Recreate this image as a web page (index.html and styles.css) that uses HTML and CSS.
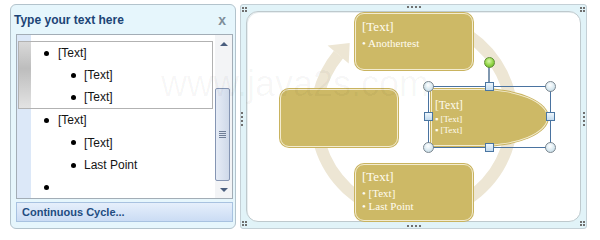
FILE: index.html
```html
<!DOCTYPE html>
<html>
<head>
<meta charset="utf-8">
<link rel="stylesheet" href="styles.css">
</head>
<body>
<div class="app">
  <section class="pane">
    <header class="pane-head">
      <span class="pane-title">Type your text here</span>
      <span class="pane-close">x</span>
    </header>
    <div class="list">
      <div class="rows">
        <div class="group selected">
          <div class="row l1"><span class="dot"></span>[Text]</div>
          <div class="row l2"><span class="dot"></span>[Text]</div>
          <div class="row l2"><span class="dot"></span>[Text]</div>
        </div>
        <div class="group">
          <div class="row l1"><span class="dot"></span>[Text]</div>
          <div class="row l2"><span class="dot"></span>[Text]</div>
          <div class="row l2"><span class="dot"></span>Last Point</div>
          <div class="row l1"><span class="dot"></span></div>
        </div>
      </div>
      <div class="scrollbar">
        <div class="sb-btn"><span class="tri up"></span></div>
        <div class="track">
          <div class="thumb"><span class="grip"></span></div>
        </div>
        <div class="sb-btn"><span class="tri down"></span></div>
      </div>
    </div>
    <footer class="pane-foot">Continuous Cycle...</footer>
  </section>

  <section class="canvas">
    <div class="canvas-inner"></div>
    <svg class="ring" width="345" height="223" viewBox="0 0 345 223">
      <path d="M124.0 27.13 A98 98 0 1 1 97.5 49.5" fill="none" stroke="#ede6d4" stroke-width="12"/>
      <polygon points="108.7,38.0 86.6,40.6 107.7,58.5" fill="#ede6d4"/>
    </svg>

    <div class="node top">
      <div class="n-title">[Text]</div>
      <div class="n-bullet">• Anothertest</div>
    </div>
    <div class="node left"></div>
    <div class="node bottom">
      <div class="n-title">[Text]</div>
      <div class="n-bullet">• [Text]</div>
      <div class="n-bullet tight">• Last Point</div>
    </div>
    <div class="node right">
      <div class="r-title">[Text]</div>
      <div class="r-bullet">▪ [Text]</div>
      <div class="r-bullet">▪ [Text]</div>
    </div>

    <div class="selection">
      <span class="stem"></span>
      <span class="h-rot"></span>
      <span class="hc tl"></span><span class="hc tr"></span>
      <span class="hc bl"></span><span class="hc br"></span>
      <span class="hs tm"></span><span class="hs bm"></span>
      <span class="hs ml"></span><span class="hs mr"></span>
    </div>

    <span class="gd corner c-tl"></span>
    <span class="gd corner c-tr"></span>
    <span class="gd corner c-bl"></span>
    <span class="gd corner c-br"></span>
    <span class="gd hz g-top"></span>
    <span class="gd hz g-bottom"></span>
    <span class="gd vt g-left"></span>
    <span class="gd vt g-right"></span>
  </section>

  <span class="watermark">www.java2s.com</span>
</div>
</body>
</html>
```

FILE: styles.css
```css
* { box-sizing: border-box; }

body {
  margin: 0;
  background: #ffffff;
  font-family: "Liberation Sans", Arial, sans-serif;
}

.app {
  position: relative;
  display: flex;
  align-items: flex-start;
  gap: 4px;
  padding: 4px 0 0 10px;
}

/* ---------- text pane ---------- */
.pane {
  width: 226px;
  height: 225px;
  border: 1px solid #b3c3cc;
  border-radius: 6px;
  background: #e6f6fc;
  display: flex;
  flex-direction: column;
}

.pane-head {
  height: 29px;
  flex: none;
  display: flex;
  align-items: center;
  justify-content: space-between;
  padding: 0 9px 0 3px;
}

.pane-title {
  font-size: 12px;
  font-weight: bold;
  color: #1c4476;
}

.pane-close {
  font-size: 14px;
  font-weight: bold;
  color: #7f8e9a;
  line-height: 1;
}

.list {
  margin-left: 5px;
  width: 217px;
  height: 165px;
  flex: none;
  border: 1px solid #a3adb6;
  background: #fff;
  display: flex;
}

.rows {
  width: 198px;
  padding-top: 6px;
  overflow: hidden;
  background: linear-gradient(to right, #dce8f8 0, #dce8f8 14px, #ffffff 14px);
}

.group { padding-left: 2px; }

.group.selected {
  margin-left: 1px;
  width: 195px;
  padding-left: 0;
  border: 1px solid #b2b2b2;
  background:
    linear-gradient(#d9d9d9, #bdbdbd 40%, #e3e3e3) left top / 12px 100% no-repeat,
    #ffffff;
}

.row {
  height: 22.5px;
  display: flex;
  align-items: center;
  font-size: 12px;
  color: #141414;
}

.group.selected .row { height: 22px; }

.row.l1 { padding-left: 25px; }
.row.l2 { padding-left: 52px; }

.dot {
  width: 5px;
  height: 5px;
  border-radius: 50%;
  background: #000;
  flex: none;
}
.l1 .dot { margin-right: 9px; }
.l2 .dot { margin-right: 8px; }

.scrollbar {
  width: 17px;
  display: flex;
  flex-direction: column;
  background: #f3f4f6;
}

.sb-btn {
  height: 17px;
  flex: none;
  display: flex;
  align-items: center;
  justify-content: center;
}

.tri {
  width: 0;
  height: 0;
  border-left: 4px solid transparent;
  border-right: 4px solid transparent;
}
.tri.up { border-bottom: 4px solid #4a5e7e; }
.tri.down { border-top: 4px solid #4a5e7e; }

.track { flex: 1; }

.thumb {
  margin: 36px 1px 0 0;
  width: 15px;
  height: 93px;
  border: 1px solid #8595b3;
  border-radius: 2px;
  background: linear-gradient(to right, #e6ecf6, #cfd9e9);
  display: flex;
  align-items: center;
  justify-content: center;
}

.grip {
  width: 7px;
  height: 7px;
  background: repeating-linear-gradient(#6f7e96 0, #6f7e96 1px, transparent 1px, transparent 2px);
}

.pane-foot {
  margin: 3px 0 0 5px;
  width: 217px;
  height: 20px;
  flex: none;
  border: 1px solid #a8c2e0;
  background: linear-gradient(#e6effb, #cbdcf4);
  font-size: 11px;
  font-weight: bold;
  color: #224c80;
  line-height: 18px;
  padding-left: 5px;
}

/* ---------- diagram canvas ---------- */
.canvas {
  position: relative;
  width: 347px;
  height: 225px;
  border: 1px solid #c4d0d6;
  border-radius: 3px;
  background: #e1f3f8;
  padding: 6px 5px;
}

.canvas-inner {
  height: 100%;
  border: 1px solid #bec9cd;
  border-radius: 12px;
  background: #ffffff;
  box-shadow: inset 1px 1px 0 #e8eef0;
}

.ring {
  position: absolute;
  left: 0;
  top: 0;
}

.node {
  position: absolute;
  background: #cdb966;
  border: 1px solid #f3ecd0;
  box-shadow: 0 0 0 1px #c9b35f;
  border-radius: 9px;
  color: #fffcf0;
  font-family: "Liberation Serif", "Times New Roman", serif;
  padding: 5px 6px;
}

.node.top { left: 114px; top: 8px; width: 118px; height: 57px; }
.node.left { left: 39px; top: 84px; width: 118px; height: 58px; }
.node.bottom { left: 114px; top: 159px; width: 118px; height: 57px; padding-top: 4px; }

.node.right {
  left: 190px;
  top: 84px;
  width: 117px;
  height: 57px;
  border-radius: 0 68px 68px 0 / 0 28.5px 28.5px 0;
  padding: 8px 3px;
}

.n-title { font-size: 13px; line-height: 16px; }
.n-bullet { font-size: 11px; line-height: 13px; margin-top: 2px; }
.n-bullet.tight { margin-top: 0; }

.r-title { font-size: 11.5px; line-height: 14px; }
.r-bullet { font-size: 9px; line-height: 11px; }
.r-title + .r-bullet { margin-top: 2px; }

.selection {
  position: absolute;
  left: 187px;
  top: 81px;
  width: 123px;
  height: 62px;
  border: 1px solid #4a73a0;
}

.hc, .hs, .h-rot, .stem { position: absolute; }

.hc {
  width: 11px;
  height: 11px;
  border-radius: 50%;
  border: 1px solid #7c8790;
  background: radial-gradient(circle at 45% 35%, #ffffff 0, #d6e7ef 60%, #b3ccd8 100%);
}
.hc.tl { left: -6px; top: -6px; }
.hc.tr { right: -6px; top: -6px; }
.hc.bl { left: -6px; bottom: -6px; }
.hc.br { right: -6px; bottom: -6px; }

.hs {
  width: 9px;
  height: 9px;
  border: 1px solid #4a76a2;
  background: linear-gradient(#eef6fc, #c3dbee);
}
.hs.tm { left: calc(50% - 5px); top: -5px; }
.hs.bm { left: calc(50% - 5px); bottom: -5px; }
.hs.ml { left: -5px; top: calc(50% - 5px); }
.hs.mr { right: -5px; top: calc(50% - 5px); }

.stem {
  left: 59px;
  top: -21px;
  width: 2px;
  height: 17px;
  background: #8198b0;
}

.h-rot {
  left: 55px;
  top: -30px;
  width: 11px;
  height: 11px;
  border-radius: 50%;
  border: 1px solid #5f8d35;
  background: radial-gradient(circle at 45% 35%, #dbf8ab 0, #8fd444 55%, #5ea826 100%);
}

.gd {
  position: absolute;
  width: 2px;
  height: 2px;
  background: #707070;
}
.gd.corner { box-shadow: 3px 0 #707070, 0 3px #707070, 3px 3px #707070; }
.gd.hz { box-shadow: 4px 0 #707070, 8px 0 #707070, 12px 0 #707070; }
.gd.vt { box-shadow: 0 4px #707070, 0 8px #707070, 0 12px #707070; }

.c-tl { left: 1px; top: 2px; }
.c-tr { left: 339px; top: 2px; }
.c-bl { left: 1px; top: 216px; }
.c-br { left: 339px; top: 216px; }
.g-top { left: 166px; top: 1px; }
.g-bottom { left: 166px; top: 220px; }
.g-left { left: 0px; top: 107px; }
.g-right { left: 342px; top: 107px; }

.watermark {
  position: absolute;
  left: 161px;
  top: 66px;
  font-size: 36px;
  line-height: 36px;
  color: rgba(0, 0, 0, 0.035);
  pointer-events: none;
  white-space: nowrap;
}
```
